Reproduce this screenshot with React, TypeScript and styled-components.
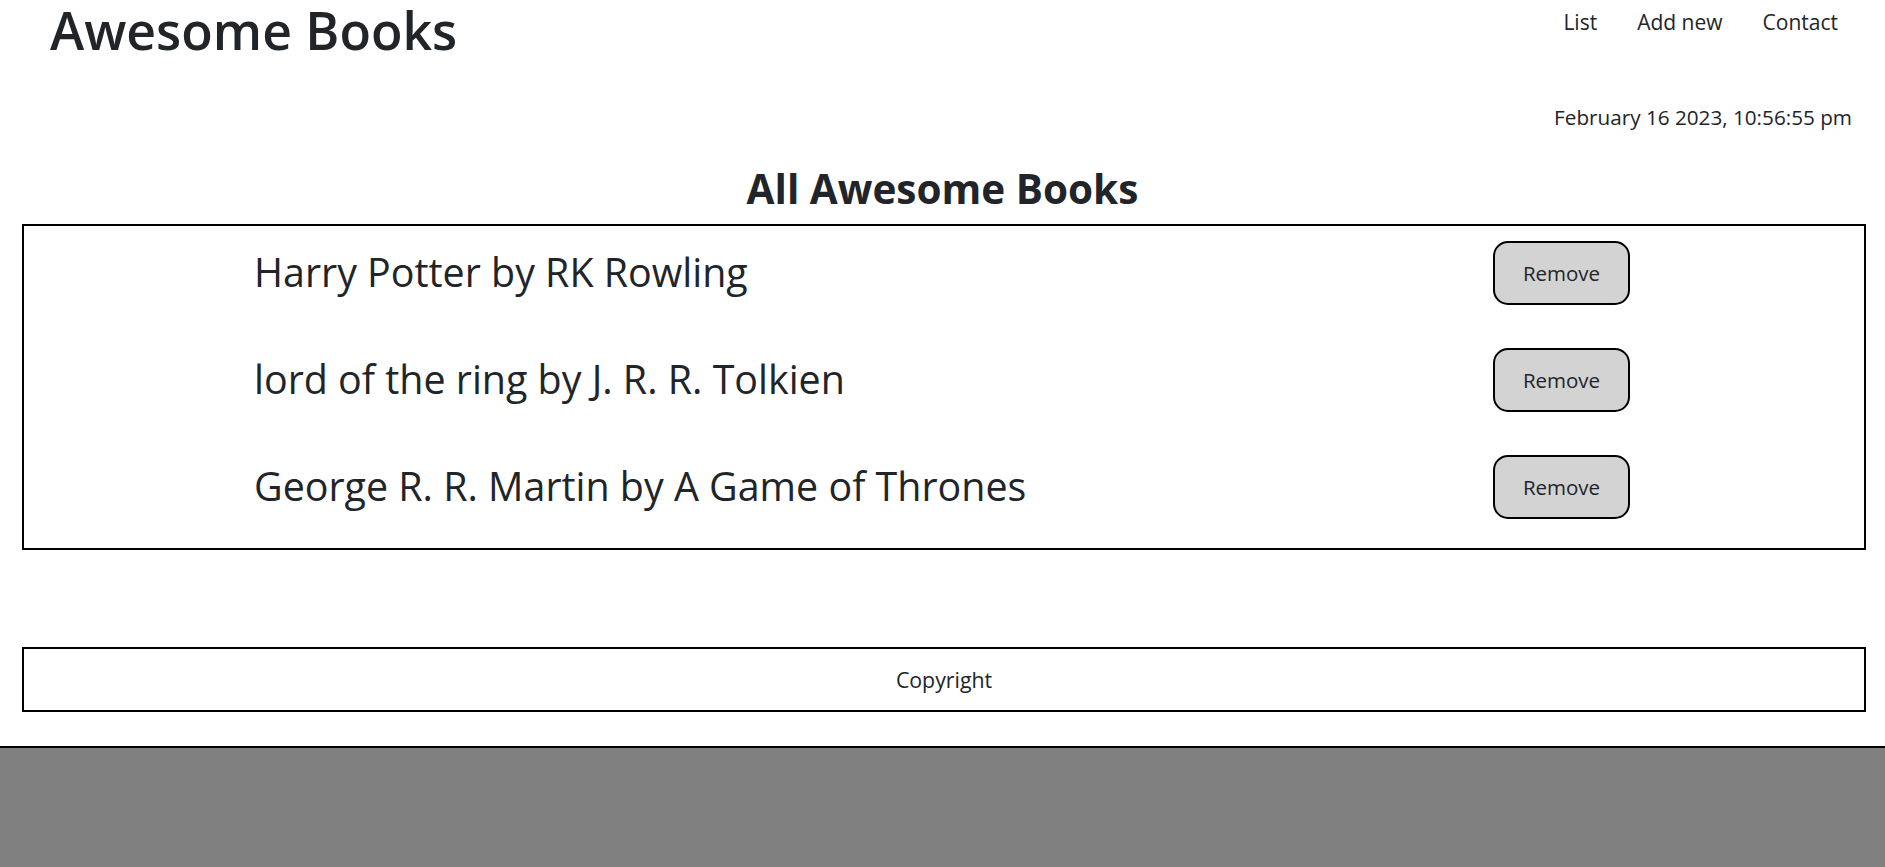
import React from "react";
import styled, { createGlobalStyle } from "styled-components";

const GlobalStyle = createGlobalStyle`
  html, body {
    margin: 0;
    padding: 0;
    background: #ffffff;
  }
  body {
    font-family: "Open Sans", "Noto Sans", Arial, sans-serif;
    color: #212529;
  }
  * { box-sizing: border-box; }
`;

const Page = styled.div`
  min-height: 100vh;
  display: flex;
  flex-direction: column;
`;

const Header = styled.header`
  display: flex;
  justify-content: space-between;
  align-items: flex-start;
  padding: 0 47px 0 50px;
`;

const Brand = styled.h1`
  margin: 0;
  font-size: 51.7px;
  font-weight: 600;
  line-height: 61px;
  color: #212529;
`;

const Nav = styled.nav`
  display: flex;
  gap: 40px;
  padding-top: 7px;
`;

const NavLink = styled.a`
  font-size: 21px;
  line-height: 1.5;
  color: #212529;
  text-decoration: none;
  cursor: pointer;
`;

const DateLine = styled.p`
  margin: 41px 0 0;
  padding-right: 33px;
  text-align: right;
  font-size: 20.7px;
  line-height: 1.5;
  color: #212529;
`;

const Heading = styled.h2`
  margin: 32px 0 10px;
  text-align: center;
  font-size: 40.5px;
  font-weight: 700;
  line-height: 1.2;
  color: #212529;
`;

const BookList = styled.ul`
  list-style: none;
  margin: 0 19px 0 22px;
  padding: 15px 0 29px;
  border: 2px solid #000;
  display: flex;
  flex-direction: column;
  gap: 43px;
`;

const BookRow = styled.li`
  display: flex;
  justify-content: space-between;
  align-items: center;
  padding: 0 234px 0 230px;
  height: 64px;
`;

const BookTitle = styled.span`
  font-size: 39.4px;
  line-height: 1.362;
  color: #212529;
`;

const RemoveButton = styled.button`
  width: 137px;
  height: 64px;
  border: 2px solid #000;
  border-radius: 15px;
  background: #d3d3d3;
  font-family: "Open Sans", "Noto Sans", Arial, sans-serif;
  font-size: 20.5px;
  color: #212529;
  cursor: pointer;
  padding: 0;
`;

const Footer = styled.footer`
  margin: 97px 19px 0 22px;
  height: 65px;
  border: 2px solid #000;
  display: flex;
  align-items: center;
  justify-content: center;
  font-size: 21.3px;
  color: #212529;
`;

const GreySection = styled.section`
  margin-top: 34px;
  flex: 1;
  border-top: 2px solid #000;
  background: #808080;
`;

const books = [
  { title: "Harry Potter", author: "RK Rowling" },
  { title: "lord of the ring", author: "J. R. R. Tolkien" },
  { title: "George R. R. Martin", author: "A Game of Thrones" },
];

export default function App() {
  return (
    <>
      <GlobalStyle />
      <Page>
        <Header>
          <Brand>Awesome Books</Brand>
          <Nav>
            <NavLink>List</NavLink>
            <NavLink>Add new</NavLink>
            <NavLink>Contact</NavLink>
          </Nav>
        </Header>
        <DateLine>February 16 2023, 10:56:55 pm</DateLine>
        <Heading>All Awesome Books</Heading>
        <BookList>
          {books.map((b) => (
            <BookRow key={b.title}>
              <BookTitle>
                {b.title} by {b.author}
              </BookTitle>
              <RemoveButton type="button">Remove</RemoveButton>
            </BookRow>
          ))}
        </BookList>
        <Footer>Copyright</Footer>
        <GreySection />
      </Page>
    </>
  );
}
